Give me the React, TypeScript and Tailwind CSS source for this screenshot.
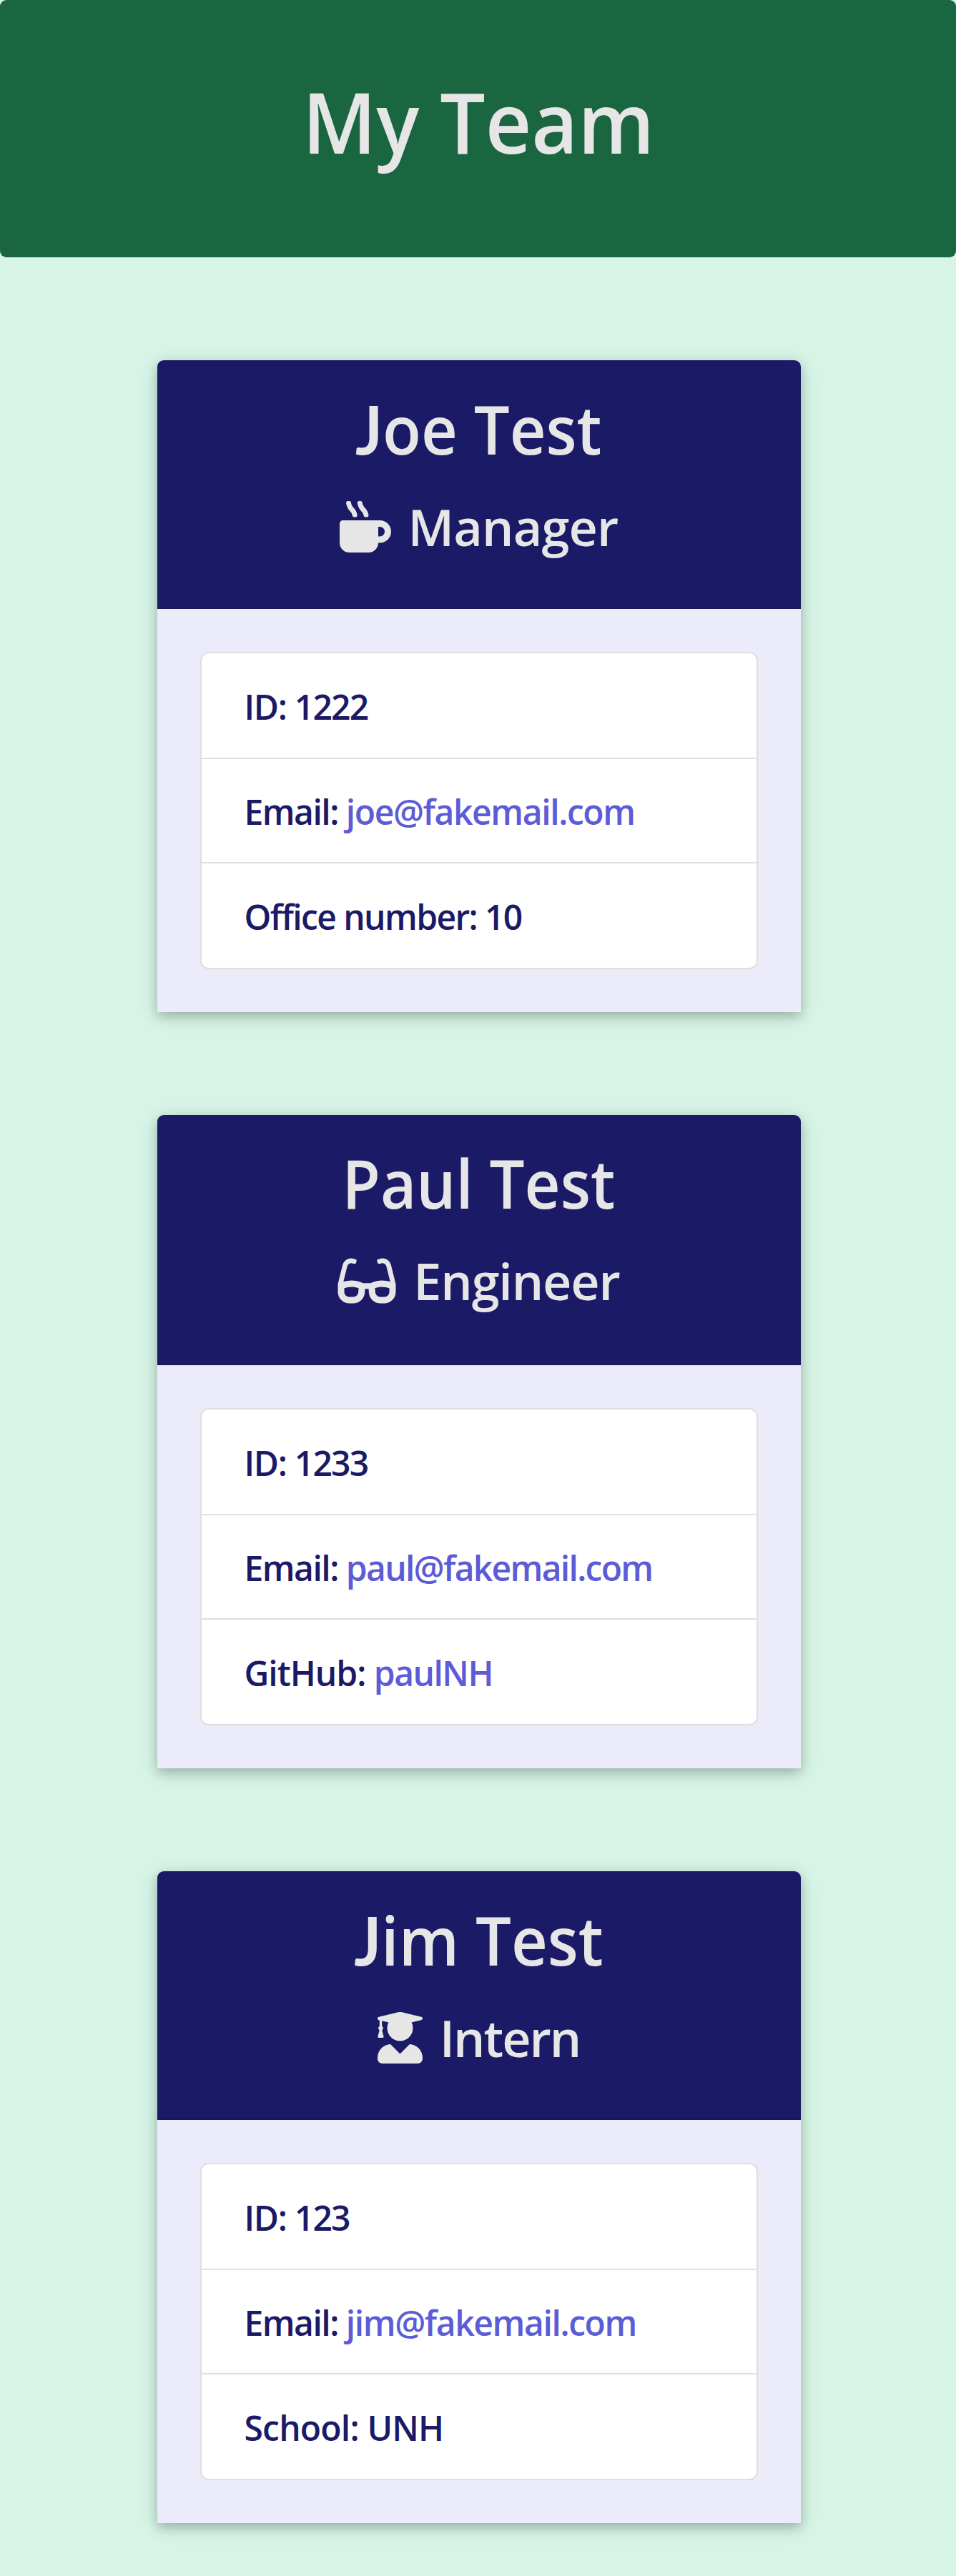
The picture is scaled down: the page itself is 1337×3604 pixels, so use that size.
import type { ReactNode } from "react";
import type { IconType } from "react-icons";
import { FaMugHot, FaGlasses, FaUserGraduate } from "react-icons/fa";

type Row = { label: string; labelClass: string; value: string; valueClass: string; href?: string };

type Member = {
  name: ReactNode;
  nameClass: string;
  role: string;
  roleClass: string;
  Icon: IconType;
  iconClass: string;
  headClass: string;
  rows: Row[];
};

const J = () => <span className="font-['Lato'] font-bold">J</span>;

const team: Member[] = [
  {
    name: <><J />oe Test</>,
    nameClass: "scale-x-[0.94]",
    role: "Manager",
    roleClass: "tracking-[-0.8px]",
    Icon: FaMugHot,
    iconClass: "w-[72px]",
    headClass: "h-[348px]",
    rows: [
      { label: "ID:", labelClass: "tracking-[-1.3px]", value: "1222", valueClass: "tracking-[-1.8px]" },
      { label: "Email:", labelClass: "tracking-[-1.5px]", value: "joe@fakemail.com", valueClass: "tracking-[-1.4px]", href: "mailto:joe@fakemail.com" },
      { label: "Office number:", labelClass: "tracking-[-1.6px]", value: "10", valueClass: "tracking-[-1.8px]" },
    ],
  },
  {
    name: "Paul Test",
    nameClass: "scale-x-[0.925]",
    role: "Engineer",
    roleClass: "tracking-[-1.1px]",
    Icon: FaGlasses,
    iconClass: "w-[82px]",
    headClass: "h-[350px]",
    rows: [
      { label: "ID:", labelClass: "tracking-[-1.3px]", value: "1233", valueClass: "tracking-[-1.8px]" },
      { label: "Email:", labelClass: "tracking-[-1.5px]", value: "paul@fakemail.com", valueClass: "tracking-[-1.7px]", href: "mailto:paul@fakemail.com" },
      { label: "GitHub:", labelClass: "tracking-[-1px]", value: "paulNH", valueClass: "tracking-[-1.5px]", href: "https://github.com/paulNH" },
    ],
  },
  {
    name: <><J />im Test</>,
    nameClass: "scale-x-[0.94]",
    role: "Intern",
    roleClass: "tracking-[-2px]",
    Icon: FaUserGraduate,
    iconClass: "w-[63px]",
    headClass: "h-[348px]",
    rows: [
      { label: "ID:", labelClass: "tracking-[-1.3px]", value: "123", valueClass: "tracking-[-1.8px]" },
      { label: "Email:", labelClass: "tracking-[-1.5px]", value: "jim@fakemail.com", valueClass: "tracking-[-1.4px]", href: "mailto:jim@fakemail.com" },
      { label: "School:", labelClass: "tracking-[-0.8px]", value: "UNH", valueClass: "tracking-[-0.8px]" },
    ],
  },
];

function Card({ name, nameClass, role, roleClass, Icon, iconClass, headClass, rows }: Member) {
  return (
    <section className="w-[900px] rounded-t-[9px] bg-[#ebebfa] shadow-[0_6px_15px_rgba(0,0,0,0.2),0_6px_30px_rgba(0,0,0,0.12)]">
      <div className={`${headClass} flex flex-col items-center rounded-t-[9px] border-b-2 border-[#17175a] bg-[#1a1a66] pt-[38px] text-[#e6e6e6]`}>
        <h2 className={`${nameClass} text-[94px] leading-[115px] font-semibold whitespace-nowrap`}>{name}</h2>
        <h3 className={`${roleClass} mt-9 flex items-center text-[70px] leading-[86px] font-semibold whitespace-nowrap`}>
          <Icon className={`${iconClass} mr-6 h-[72px] shrink-0`} />
          {role}
        </h3>
      </div>
      <div className="p-[60px]">
        <ul className="divide-y-2 divide-[#dfdfdf] rounded-xl border-2 border-[#dfdfdf] bg-white text-[48px] leading-[72px] font-[550] whitespace-pre text-[#1a1a66]">
          {rows.map((r) => (
            <li key={r.label} className="flex h-[146px] items-center px-[60px] pt-[3px] first:h-[148px] first:pt-[4px]">
              <span className={r.labelClass}>{r.label + " "}</span>
              {r.href ? (
                <a href={r.href} className={`${r.valueClass} text-[#5c5cd6]`}>{r.value}</a>
              ) : (
                <span className={r.valueClass}>{r.value}</span>
              )}
            </li>
          ))}
        </ul>
      </div>
    </section>
  );
}

export default function App() {
  return (
    <div className="h-[3604px] overflow-hidden bg-[#d6f5e6] font-['Open_Sans','Noto_Sans',sans-serif]">
      <header className="flex h-[360px] items-center justify-center rounded-[9px] bg-[#1a6640] pb-5 pl-0.5 text-[#e6e6e6]">
        <h1 className="scale-x-[0.95] text-[118px] leading-[144px] font-semibold">My Team</h1>
      </header>
      <main className="flex flex-col items-center gap-36 pt-36 pl-0.5">
        {team.map((m) => (
          <Card key={m.role} {...m} />
        ))}
      </main>
    </div>
  );
}
